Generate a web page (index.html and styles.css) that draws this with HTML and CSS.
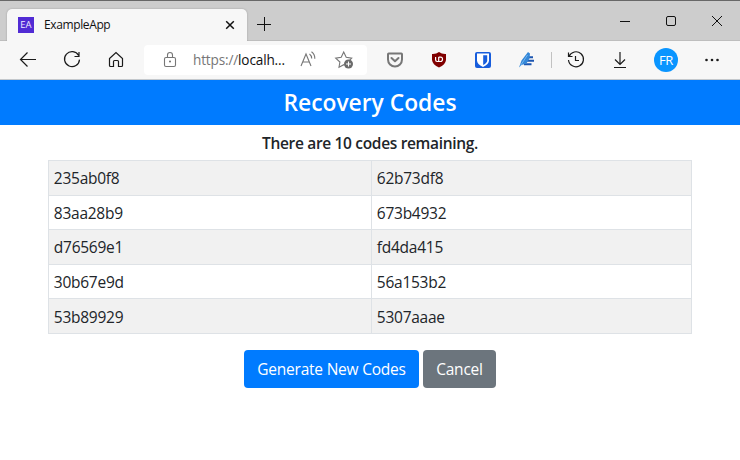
FILE: index.html
```html
<!DOCTYPE html>
<html lang="en">
<head>
<meta charset="utf-8">
<title>ExampleApp</title>
<link rel="stylesheet" href="styles.css">
</head>
<body>
<div class="titlebar">
  <div class="tab">
    <span class="favicon">EA</span>
    <span class="tab-title">ExampleApp</span>
    <svg class="tab-close" width="10" height="10" viewBox="0 0 10 10"><path d="M1.2 1.2l7.6 7.6M8.8 1.2L1.2 8.8" stroke="#111" stroke-width="1.5" fill="none"/></svg>
  </div>
  <svg class="new-tab" width="14" height="14" viewBox="0 0 14 14"><path d="M7.5 0v14M0 7.5h14" stroke="#111" fill="none"/></svg>
  <div class="window-controls">
    <svg width="46" height="40" viewBox="0 0 46 40"><path d="M18 20.5h10" stroke="#111"/></svg>
    <svg width="46" height="40" viewBox="0 0 46 40"><rect x="18.5" y="15.500" width="9" height="9" rx="1.5" stroke="#111" fill="none"/></svg>
    <svg width="46" height="40" viewBox="0 0 46 40"><path d="M18 15l10 10M28 15L18 25" stroke="#111" fill="none"/></svg>
  </div>
</div>
<div class="toolbar">
  <div class="cell"><svg class="icon" viewBox="0 0 24 24"><path d="M20 11.500H4.500M11.500 4.500l-7 7 7 7"/></svg></div>
  <div class="cell"><svg class="icon" viewBox="0 0 24 24"><path d="M18.600 7.500A7.500 7.500 0 1 0 19.500 11.600M19 4v4.500H14.500"/></svg></div>
  <div class="cell"><svg class="icon" viewBox="0 0 24 24"><path d="M5.500 10.500L12 4.600l6.500 5.900V17.500q0 1-1 1H14.500V13.500q0-1-1-1h-3q-1 0-1 1v5H6.500q-1 0-1-1z"/></svg></div>
  <div class="address">
    <svg class="icon gray lock" viewBox="0 0 24 24"><rect x="6.500" y="9.500" width="11" height="9" rx="1.500"/><path d="M9.500 9.500V7q0-2.500 2.500-2.500t2.500 2.500v2.500"/><circle cx="12" cy="13.500" r="1" class="dot"/></svg>
    <span class="url"><span class="scheme">https://</span>localh...</span>
    <svg class="icon gray" viewBox="0 0 24 24"><path d="M5 18L10 6l5 12M6.800 14h6.400M13.500 6q2.200 1.600 2.200 4.500M15.500 3.800q3.500 2.500 3.300 6.900"/></svg>
    <svg class="icon gray star" viewBox="0 0 24 24"><path d="M12.500 17l-.7-.3L7 19.200l.9-5.200-4.200-3.900 5.500-.8L11.700 4l2.500 5.300 5.500.8-2 2"/><circle cx="16.500" cy="16" r="4.500" class="solid"/><path class="plus" d="M14 16h5M16.500 13.500v5"/></svg>
  </div>
  <div class="cell"><svg class="icon" viewBox="0 0 24 24"><path class="pocket" d="M5 6.200q0-.7.7-.7h12.600q.7 0 .7.700v5.300a7 7 0 0 1-14 0z"/><path class="pocket" d="M8.500 10l3.500 3.300 3.500-3.300"/></svg></div>
  <div class="cell"><svg class="icon" viewBox="0 0 24 24"><path class="ublock" d="M12 4q3 2.300 7 2v6q-.5 4.500-7 7.500-6.500-3-7-7.500V6q4 .3 7-2z"/><path class="ublock-mark" d="M8.600 9v2.800q0 1.700 1.500 1.700h1.700M11.700 9v4.500h1.800q2 0 2-2.200T13.500 9.200h-1.800"/></svg></div>
  <div class="cell"><svg class="icon" viewBox="0 0 24 24"><rect class="vault" x="4" y="4" width="16" height="16" rx="2"/><path class="vault-mark" d="M6 5.500h12v7q0 3.500-6 6.500-6-3-6-6.500z"/><path class="vault-half" d="M12.200 7.200h4v5.300q0 2.300-4 4.500z"/></svg></div>
  <div class="cell"><svg class="icon" viewBox="0 0 24 24"><path class="quill-lines" d="M12 9.200H18M11 12.700h8M9 16.200h7.500"/><path class="quill" d="M4 19.500l2.500-7L13 4l2 1.500-.5 5-3 5-5 1.500z"/><path class="quill-light" d="M5.500 17.500L12.500 7"/></svg></div>
  <div class="divider"></div>
  <div class="cell"><svg class="icon" viewBox="0 0 24 24"><path d="M5 8.500A7.500 7.500 0 1 1 4.500 12M4.500 4.500v4h4M11.500 8v4.500H15"/></svg></div>
  <div class="cell"><svg class="icon" viewBox="0 0 24 24"><path d="M12 4v12.500M7 11.500l5 5 5-5M6 19.500h12"/></svg></div>
  <div class="cell profile"><span class="avatar">FR</span></div>
  <div class="cell"><svg class="icon" viewBox="0 0 24 24"><circle class="dot" cx="6.500" cy="12" r="1.300"/><circle class="dot" cx="12" cy="12" r="1.300"/><circle class="dot" cx="17.500" cy="12" r="1.300"/></svg></div>
</div>
<main>
  <h4 class="banner">Recovery Codes</h4>
  <h6 class="remaining">There are 10 codes remaining.</h6>
  <table class="codes">
    <tr><td>235ab0f8</td><td>62b73df8</td></tr>
    <tr><td>83aa28b9</td><td>673b4932</td></tr>
    <tr><td>d76569e1</td><td>fd4da415</td></tr>
    <tr><td>30b67e9d</td><td>56a153b2</td></tr>
    <tr><td>53b89929</td><td>5307aaae</td></tr>
  </table>
  <div class="actions">
    <button class="btn primary">Generate New Codes</button>
    <button class="btn secondary">Cancel</button>
  </div>
</main>
</body>
</html>
```
FILE: styles.css
```css
* { box-sizing: border-box; }
body {
  margin: 0;
  height: 460px;
  overflow: hidden;
  background: #fff;
  color: #212529;
  font: 15.5px/24px "Open Sans", "Noto Sans", sans-serif;
  letter-spacing: -.25px;
}
svg { display: block; flex: none; }
.titlebar {
  display: flex;
  height: 41px;
  background: #cdcdcd;
  border-top: 1px solid #686868;
  border-bottom: 1px solid #bebebe;
}
.tab {
  display: flex;
  align-items: center;
  width: 240px;
  height: 32px;
  margin: 8px 0 -1px 7px;
  padding: 0 12px 0 11px;
  background: #f7f7f7;
  border-radius: 5px 5px 0 0;
  box-shadow: 0 0 2px rgba(0, 0, 0, .25);
  clip-path: inset(-3px -3px 0 -3px);
}
.favicon {
  width: 16px;
  height: 16px;
  background: #512bd4;
  color: #eee8ff;
  font-size: 9.5px;
  letter-spacing: 0;
  line-height: 16px;
  text-align: center;
}
.tab-title { margin-left: 10px; font-size: 12px; letter-spacing: -.38px; color: #111; }
.tab-close { margin-left: auto; }
.new-tab { margin: 16px 0 0 10px; }
.window-controls { display: flex; margin-left: auto; }
.toolbar {
  display: flex;
  align-items: center;
  height: 39px;
  padding-left: 6px;
  background: #f7f7f7;
  border-bottom: 1px solid #c4c8cc;
}
.cell { display: flex; flex: none; justify-content: center; width: 44px; }
.icon { width: 24px; height: 24px; fill: none; stroke: #1b1b1b; stroke-width: 1.2; }
.icon .dot { fill: #1b1b1b; stroke: none; }
.gray { stroke: #767676; stroke-width: 1.1; }
.gray .dot, .gray .solid { fill: #6b6b6b; stroke: none; }
.gray .plus { stroke: #fff; }
.address {
  display: flex;
  align-items: center;
  flex: none;
  width: 223px;
  height: 30px;
  margin: 0 6px;
  padding-left: 14px;
  background: #fff;
  border-radius: 4px;
}
.url { width: 114px; padding-left: 11px; font-size: 13.6px; letter-spacing: -.16px; color: #111; white-space: nowrap; }
.scheme { color: #767676; }
.star { margin-left: 12px; }
.icon .pocket { stroke: #777; stroke-width: 2; stroke-linejoin: round; stroke-linecap: round; }
.icon .ublock { fill: #800000; stroke: none; }
.icon .ublock-mark { stroke: #fff; stroke-width: 1.2; }
.icon .vault { fill: #175ddc; stroke: none; }
.icon .vault-mark { fill: #fff; stroke: none; }
.icon .vault-half { fill: #175ddc; stroke: none; }
.icon .quill { fill: #3487d8; stroke: none; }
.icon .quill-light { stroke: #73b5ee; stroke-width: 1; }
.icon .quill-lines { stroke: #1c56b1; stroke-width: 2; }
.divider { flex: none; width: 1px; height: 16px; margin: 0 2px; background: #c2c2c2; }
.profile { width: 48px; }
.avatar {
  width: 24px;
  height: 24px;
  border-radius: 50%;
  background: #0a95ff;
  color: #fff;
  font-size: 13px;
  text-align: center;
}
.banner {
  margin: 0;
  padding: 9px 8px 7px;
  background: #007bff;
  color: #fff;
  font-size: 22.8px;
  font-weight: 600;
  line-height: 28.8px;
  letter-spacing: 0;
  text-align: center;
}
.remaining {
  margin: 8px 0;
  padding-top: 1px;
  font-size: 15.5px;
  font-weight: 600;
  line-height: 18.2px;
  letter-spacing: -.33px;
  text-align: center;
}
.codes {
  width: 644px;
  margin: 0 48px 16px;
  border-collapse: collapse;
}
.codes td { padding: 5.3px 4.8px 4.3px; border: 1px solid #dee2e6; line-height: 24px; }
.codes td:first-child { width: 323px; }
.codes tr:nth-child(odd) { background: #f1f1f1; }
.actions { display: flex; justify-content: center; gap: 4px; }
.btn {
  height: 38px;
  padding: 0;
  border: 0;
  border-radius: 4px;
  color: #fff;
  font: inherit;
  letter-spacing: -.22px;
}
.primary { width: 175px; background: #007bff; }
.secondary { width: 73px; background: #6c757d; }
```
